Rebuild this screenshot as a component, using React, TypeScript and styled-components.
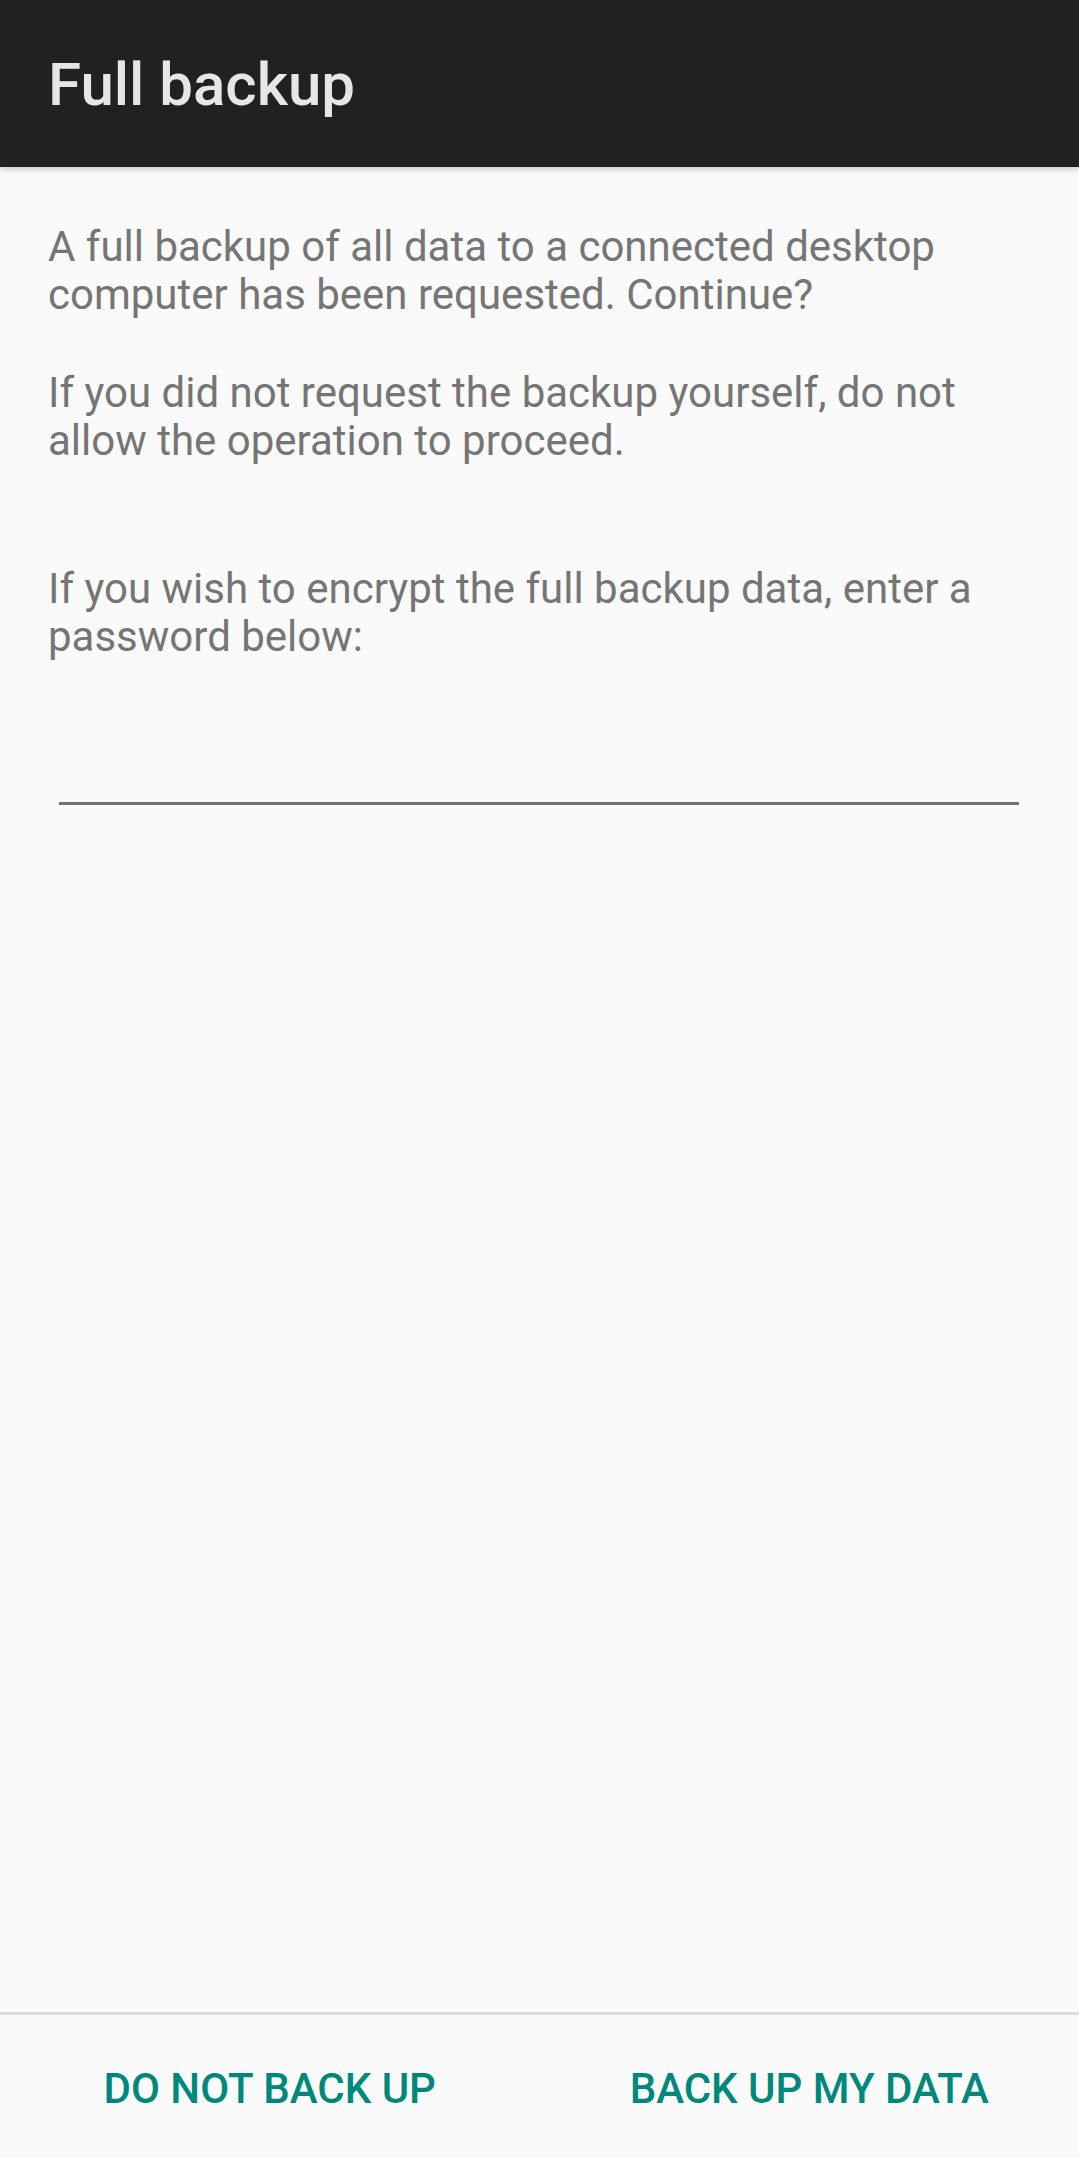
import React from "react";
import styled, { createGlobalStyle } from "styled-components";

const Global = createGlobalStyle`
  html, body { margin: 0; padding: 0; background: #fafafa; }
  body { font-family: Roboto, "Noto Sans", sans-serif; }
  * { box-sizing: border-box; }
`;

const Screen = styled.div`
  width: 1079px;
  height: 2158px;
  display: flex;
  flex-direction: column;
  background: #fafafa;
  overflow: hidden;
`;

const AppBar = styled.header`
  height: 167px;
  flex: none;
  background: #212121;
  display: flex;
  align-items: center;
  padding: 0 48px;
  box-shadow: 0 2px 6px rgba(0, 0, 0, 0.22);
  position: relative;
  z-index: 1;
`;

const Title = styled.h1`
  margin: 0;
  font-family: Roboto, sans-serif;
  font-weight: 500;
  font-size: 60px;
  color: #e6e6e6;
  line-height: 1;
  padding-top: 2px;
`;

const Body = styled.main`
  flex: 1;
  padding: 56px 48px 0 48px;
  display: flex;
  flex-direction: column;
`;

const Paragraph = styled.p<{ $gap: number }>`
  margin: 0 0 ${(p) => p.$gap}px 0;
  font-size: 42px;
  line-height: 47.5px;
  color: #757575;
  font-weight: 400;
`;

const Field = styled.div`
  margin: 0 12px 0 11px;
  height: 3px;
  background: #737373;
`;

const Footer = styled.footer`
  flex: none;
  height: 146px;
  border-top: 3px solid #dcdcdc;
  display: grid;
  grid-template-columns: 1fr 1fr;
`;

const Action = styled.button`
  border: none;
  background: transparent;
  font-family: Roboto, sans-serif;
  font-weight: 500;
  font-size: 42px;
  color: #00897b;
  text-transform: uppercase;
  display: flex;
  align-items: center;
  justify-content: center;
  padding: 3px 0 0 0;
  cursor: pointer;
`;

export default function App() {
  return (
    <>
      <Global />
      <Screen>
        <AppBar>
          <Title>Full backup</Title>
        </AppBar>
        <Body>
          <Paragraph $gap={51}>
            A full backup of all data to a connected desktop computer has been requested. Continue?
          </Paragraph>
          <Paragraph $gap={101}>
            If you did not request the backup yourself, do not allow the operation to proceed.
          </Paragraph>
          <Paragraph $gap={142}>
            If you wish to encrypt the full backup data, enter a password below:
          </Paragraph>
          <Field />
        </Body>
        <Footer>
          <Action>Do not back up</Action>
          <Action>Back up my data</Action>
        </Footer>
      </Screen>
    </>
  );
}
